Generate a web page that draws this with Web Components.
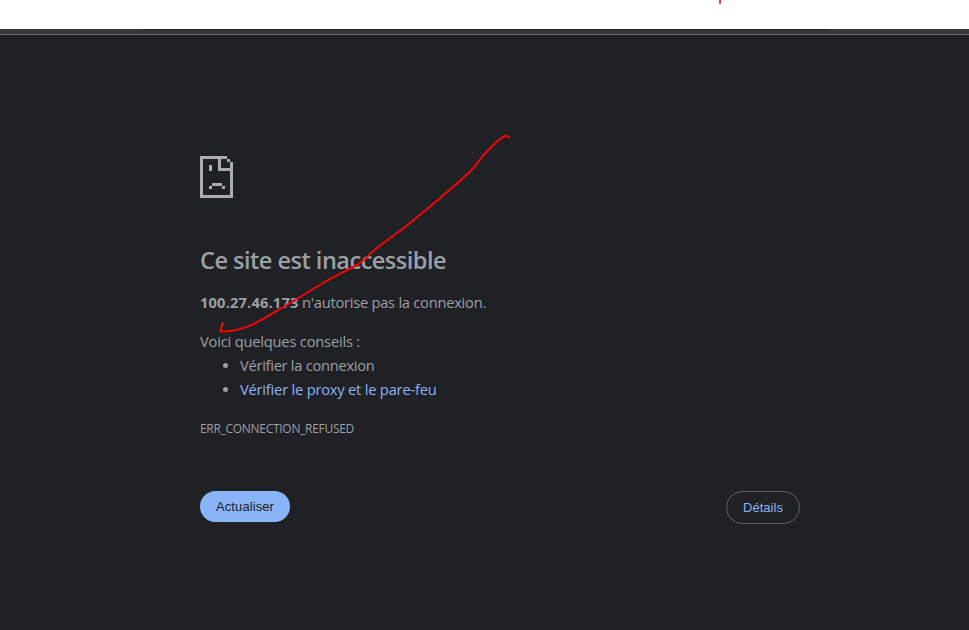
<!DOCTYPE html>
<html lang="fr">
<head>
<meta charset="utf-8">
<title>Ce site est inaccessible</title>
<style>
html,body{margin:0;height:100%;overflow:hidden;background:#202124}
</style>
</head>
<body>
<error-page></error-page>
<script>
const define = (name, html, setup) => customElements.define(name, class extends HTMLElement {
  constructor() {
    super();
    const t = document.createElement('template');
    t.innerHTML = html.trim();
    this.attachShadow({mode: 'open'}).append(t.content.cloneNode(true));
  }
  connectedCallback() { if (setup) setup(this); }
});

// Inline text whose tracking is adjusted to fill the given width.
define('fit-text', `<style>:host{display:inline-block;white-space:pre}</style><slot></slot>`, el => {
  const n = el.textContent.length;
  const target = +el.getAttribute('width');
  const w = el.getBoundingClientRect().width;
  el.style.letterSpacing = ((target - w) / n) + 'px';
});

define('window-edge', `
<style>
:host{display:block;height:35px;background:#fff}
.gap{height:29px}
.bar{height:5px;background:#373737;border-bottom:1px solid #646765}
.shade{width:686px;height:1px;margin-left:142px;background:#222;display:block}
.mark{display:block;width:2px;height:4px;margin-left:719px;background:#f3343c;border-radius:0 0 1px 1px}
</style>
<div class="gap"><i class="mark"></i></div><div class="bar"><i class="shade"></i></div>`);

define('sad-page-icon', `
<style>:host{display:block;width:33px;height:42px}svg{display:block}</style>
<svg width="33" height="42" viewBox="0 0 11 14" fill="#ababab" shape-rendering="crispEdges">
<path d="M0 0H9V1H10V2H11V14H0ZM1 1V13H10V5H6V1ZM7 1V4H10V2H9V1Z" fill-rule="evenodd"/>
<path d="M3 3H4V5H3ZM4 9H7.334V10H8.334V11H7.334V10H4V11H3V10H4Z"/>
</svg>`);

define('pill-button', `
<style>
:host{display:block}
button{display:block;box-sizing:border-box;font:13px/16px "Liberation Sans",Arial,sans-serif;height:31px;width:90px;padding:0;border:0;border-radius:16px;background:#8ab4f8;color:#202124}
:host([outline]) button{width:74px;height:33px;border:1px solid #5f6368;border-radius:17px;background:transparent;color:#8ab4f8}
</style>
<button><slot></slot></button>`);

define('tip-item', `
<style>
:host{display:block;height:24px;line-height:24px}
.row{display:flex;align-items:center}
i{width:5px;height:5px;border-radius:50%;background:#9aa0a6;margin:1px 12px 0 23px}
:host([link]) .t{color:#8ab4f8}
</style>
<div class="row"><i></i><span class="t"><slot></slot></span></div>`);

define('pen-arrow', `
<style>:host{position:absolute;left:0;top:0;pointer-events:none}svg{display:block}</style>
<svg width="969" height="630" fill="none" stroke="#f40404" stroke-width="2" stroke-linecap="round" stroke-linejoin="round">
<path d="M509.500 137.500L506 135.500C500 138 492 146 486 152.500C480 159 475 167 469 172.500C459 182 447 192 438 200C428 208 419 216 410 223C400 231 389 239 380 245.500C371 252 365 260 357 265C346 271 333 277 323 283C308 292 294 301 280 309C260 321 243 332 220.500 331.500L222.500 323"/>
</svg>`);

define('error-page', `
<style>
:host{display:flex;flex-direction:column;position:relative;width:969px;height:630px;background:#202124;color:#9aa0a6;font:14.7px/24px "Open Sans","Noto Sans",sans-serif}
main{width:600px;margin:121px auto 0 200px}
h1{font-size:23.5px;line-height:30px;font-weight:600;margin:47px 0 0}
p{margin:0}
.lead{margin-top:15px}
.tips{margin-top:15px}
ul{margin:0;padding:0}
.code{font-size:12px;line-height:18px;margin-top:19px}
.actions{display:flex;justify-content:space-between;align-items:flex-start;margin-top:53px}
</style>
<window-edge></window-edge>
<main>
<sad-page-icon></sad-page-icon>
<h1><fit-text width="246">Ce site est inaccessible</fit-text></h1>
<p class="lead"><b><fit-text width="98.5">100.27.46.173</fit-text></b><fit-text width="187.500"> n'autorise pas la connexion.</fit-text></p>
<p class="tips"><fit-text width="160">Voici quelques conseils :</fit-text></p>
<ul>
<tip-item><fit-text width="134.500">Vérifier la connexion</fit-text></tip-item>
<tip-item link><fit-text width="196.500">Vérifier le proxy et le pare-feu</fit-text></tip-item>
</ul>
<p class="code"><fit-text width="154">ERR_CONNECTION_REFUSED</fit-text></p>
<div class="actions">
<pill-button><fit-text width="58">Actualiser</fit-text></pill-button>
<pill-button outline><fit-text width="40">Détails</fit-text></pill-button>
</div>
</main>
<pen-arrow></pen-arrow>`);
</script>
</body>
</html>
